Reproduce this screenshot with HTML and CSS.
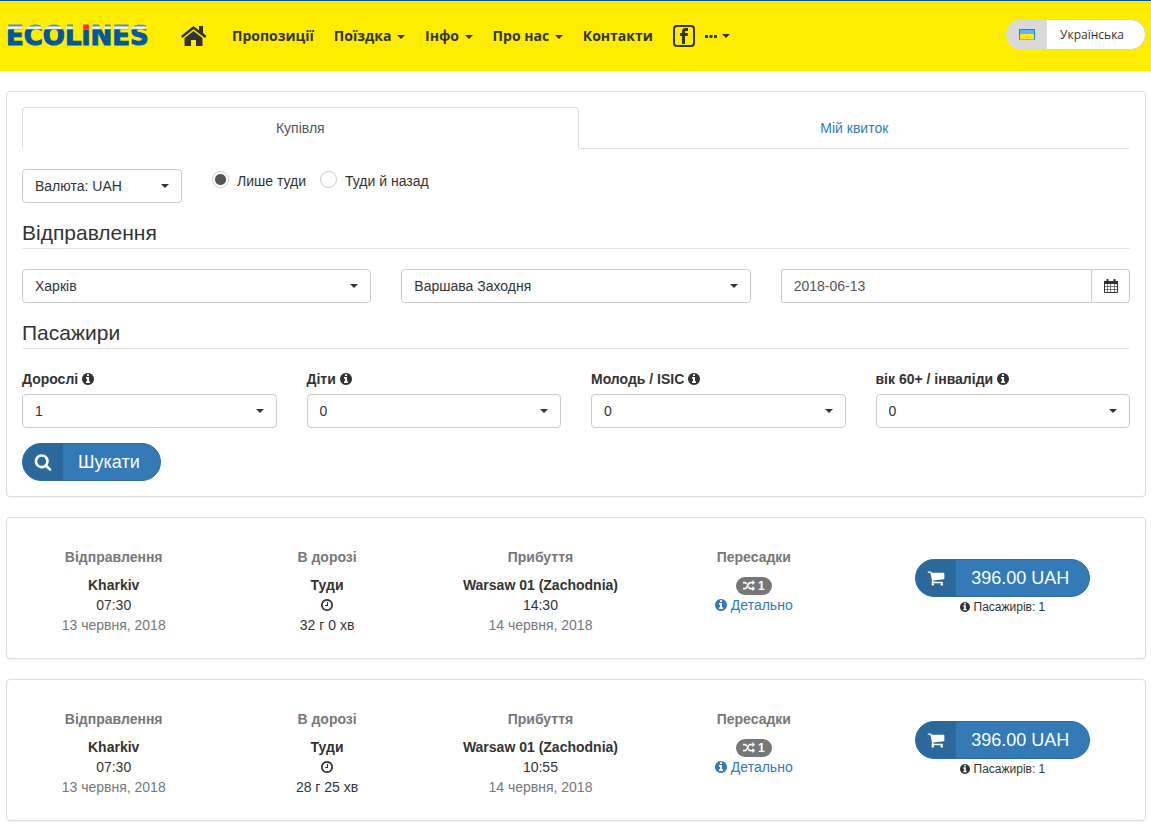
FILE: index.html
```html
<!DOCTYPE html>
<html lang="uk">
<head>
    <meta charset="UTF-8">
    <meta name="viewport" content="width=device-width, initial-scale=1.0">
    <title>Ecolines</title>
    <link rel="stylesheet" href="styles.css">
</head>
<body>
    <!-- Icon set -->
    <svg class="icon-defs" aria-hidden="true">
        <symbol id="i-info" viewBox="0 0 1536 1792"><path d="M1024 1376v-160q0-14-9-23t-23-9h-96v-512q0-14-9-23t-23-9h-320q-14 0-23 9t-9 23v160q0 14 9 23t23 9h96v320h-96q-14 0-23 9t-9 23v160q0 14 9 23t23 9h448q14 0 23-9t9-23zm-128-896v-160q0-14-9-23t-23-9h-192q-14 0-23 9t-9 23v160q0 14 9 23t23 9h192q14 0 23-9t9-23zm640 416q0 209-103 385.5t-279.5 279.5-385.5 103-385.5-103-279.5-279.5-103-385.5 103-385.5 279.5-279.5 385.5-103 385.5 103 279.5 279.5 103 385.5z"/></symbol>
        <symbol id="i-clock" viewBox="128 0 1536 1792"><path d="M1024 544v448q0 14-9 23t-23 9h-320q-14 0-23-9t-9-23v-64q0-14 9-23t23-9h224v-352q0-14 9-23t23-9h64q14 0 23 9t9 23zm416 352q0-148-73-273t-198-198-273-73-273 73-198 198-73 273 73 273 198 198 273 73 273-73 198-198 73-273zm224 0q0 209-103 385.5t-279.5 279.5-385.5 103-385.5-103-279.5-279.5-103-385.5 103-385.5 279.5-279.5 385.5-103 385.5 103 279.5 279.5 103 385.5z"/></symbol>
        <symbol id="i-search" viewBox="0 0 1792 1792"><path d="M1216 832q0-185-131.5-316.5t-316.5-131.5-316.5 131.5-131.5 316.5 131.5 316.5 316.5 131.5 316.5-131.5 131.5-316.5zm512 832q0 52-38 90t-90 38q-54 0-90-38l-343-342q-179 124-399 124-143 0-273.5-55.5t-225-150-150-225-55.5-273.5 55.5-273.5 150-225 225-150 273.5-55.5 273.5 55.5 225 150 150 225 55.5 273.5q0 220-124 399l343 343q37 37 37 90z"/></symbol>
        <symbol id="i-cart" viewBox="0 0 1792 1792"><path d="M704 1536q0 52-38 90t-90 38-90-38-38-90 38-90 90-38 90 38 38 90zm896 0q0 52-38 90t-90 38-90-38-38-90 38-90 90-38 90 38 38 90zm128-1088v512q0 24-16.5 42.5t-40.5 21.5l-1044 122q13 60 13 70 0 16-24 64h920q26 0 45 19t19 45-19 45-45 19h-1024q-26 0-45-19t-19-45q0-11 8-31.5t16-36 21.5-40 15.5-29.5l-177-823h-204q-26 0-45-19t-19-45 19-45 45-19h256q16 0 28.5 6.5t19.5 15.5 13 24.5 8 26 5.5 29.5 4.5 26h1201q26 0 45 19t19 45z"/></symbol>
        <symbol id="i-random" viewBox="0 0 1792 1792"><path d="M666 481q-60 92-137 273-22-45-37-72.5t-40.5-63.5-51-56.5-63-35-81.5-14.5h-224q-14 0-23-9t-9-23v-192q0-14 9-23t23-9h224q250 0 410 225zm1126 799q0 14-9 23l-320 320q-9 9-23 9-13 0-22.5-9.5t-9.5-22.5v-192q-32 0-85 .5t-81 1-73-1-71-5-64-10.5-63-18.5-58-28.5-59-40-55-53.5-56-69.5q59-93 136-273 22 45 37 72.5t40.5 63.5 51 56.5 63 35 81.5 14.5h256v-192q0-14 9-23t23-9q12 0 24 10l319 319q9 9 9 23zm0-896q0 14-9 23l-320 320q-9 9-23 9-13 0-22.5-9.5t-9.5-22.5v-192h-256q-48 0-87 15t-69 45-51 61.5-45 77.5q-32 62-78 171-29 66-49.5 111t-54 105-64 100-74 83-90 68.5-106.5 42-128 16.5h-224q-14 0-23-9t-9-23v-192q0-14 9-23t23-9h224q48 0 87-15t69-45 51-61.5 45-77.5q32-62 78-171 29-66 49.5-111t54-105 64-100 74-83 90-68.5 106.5-42 128-16.5h256v-192q0-14 9-23t23-9q12 0 24 10l319 319q9 9 9 23z"/></symbol>
    </svg>

    <header>
        <a href="#" class="logo" aria-label="Ecolines">
            <svg width="152" height="32" viewBox="0 0 152 32">
                <defs>
                    <linearGradient id="letters" gradientUnits="userSpaceOnUse" x1="0" y1="5" x2="0" y2="25">
                        <stop offset=".05" stop-color="#5d90ae"/>
                        <stop offset=".1" stop-color="#fff"/>
                        <stop offset=".18" stop-color="#e4ecee"/>
                        <stop offset=".24" stop-color="#00579d"/>
                    </linearGradient>
                    <linearGradient id="dot" gradientUnits="userSpaceOnUse" x1="0" y1="5" x2="0" y2="25">
                        <stop offset=".24" stop-color="#ff2a1a"/>
                        <stop offset=".25" stop-color="#00579d"/>
                    </linearGradient>
                </defs>
                <text x="0" y="25" class="logo-text">ECOL<tspan class="logo-i">i</tspan>NES</text>
            </svg>
        </a>
        <nav>
            <a href="#" class="home" aria-label="Головна">
                <svg width="26" height="20" viewBox="0 0 26 20"><path d="M12.500 0 0 10l1.300 2L12.500 3.300 24 12l1.500-2-3.500-3V0h-4v4.200z"/><path d="M12.500 5 3.500 12v8H10v-6h5v6h6.500v-8z"/></svg>
            </a>
            <a href="#">Пропозиції</a>
            <a href="#">Поїздка <span class="caret"></span></a>
            <a href="#">Інфо <span class="caret"></span></a>
            <a href="#">Про нас <span class="caret"></span></a>
            <a href="#">Контакти</a>
            <a href="#" class="social" aria-label="Facebook">
                <svg width="22" height="22" viewBox="0 0 22 22"><rect x="1" y="1" width="20" height="20" rx="3" fill="none" stroke="currentColor" stroke-width="2"/><path d="M9 19v-8H7V8h2V6.500C9 4 10.500 3 12.500 3H15v3h-1.500C12.400 6 12 6.400 12 7.200V8h3l-.4 3H12v8z"/></svg>
                <svg class="dots" width="12" height="3" viewBox="0 0 12 3"><path d="M0 0h3v3H0zM4.500 0h3v3h-3zM9 0h3v3H9z"/></svg>
                <span class="caret"></span>
            </a>
        </nav>
        <button type="button" class="language">
            <span class="language-flag"><span class="flag"></span></span>
            <span class="language-name">Українська</span>
        </button>
    </header>

    <main>
        <form class="panel search">
            <div class="tabs">
                <a href="#" class="tab active">Купівля</a>
                <a href="#" class="tab">Мій квиток</a>
            </div>

            <div class="options">
                <div class="select currency">
                    <select aria-label="Валюта"><option>Валюта: UAH</option></select>
                </div>
                <div class="radios">
                    <label><input type="radio" name="way" checked> Лише туди</label>
                    <label><input type="radio" name="way"> Туди й назад</label>
                </div>
            </div>

            <h2>Відправлення</h2>
            <div class="row thirds">
                <div class="select">
                    <select aria-label="Звідки"><option>Харків</option></select>
                </div>
                <div class="select">
                    <select aria-label="Куди"><option>Варшава Заходня</option></select>
                </div>
                <div class="date">
                    <input type="text" value="2018-06-13" aria-label="Дата">
                    <button type="button" aria-label="Календар">
                        <svg width="14" height="14" viewBox="0 0 14 14"><path d="M0 2h14v3H0z"/><path d="M3.500 0v3M10.500 0v3" stroke="currentColor" stroke-width="2"/><path d="M.5 4.500v9h13v-9" fill="none" stroke="currentColor"/><path d="M3.500 5v8.500M6.500 5v8.500M10.500 5v8.500M1 7.500h12M1 10.500h12" fill="none" stroke="currentColor" stroke-opacity=".6"/></svg>
                    </button>
                </div>
            </div>

            <h2>Пасажири</h2>
            <div class="row quarters">
                <div>
                    <label for="adults">Дорослі <svg class="icon"><use href="#i-info"/></svg></label>
                    <div class="select"><select id="adults"><option>1</option></select></div>
                </div>
                <div>
                    <label for="children">Діти <svg class="icon"><use href="#i-info"/></svg></label>
                    <div class="select"><select id="children"><option>0</option></select></div>
                </div>
                <div>
                    <label for="youth">Молодь / ISIC <svg class="icon"><use href="#i-info"/></svg></label>
                    <div class="select"><select id="youth"><option>0</option></select></div>
                </div>
                <div>
                    <label for="seniors">вік 60+ / інваліди <svg class="icon"><use href="#i-info"/></svg></label>
                    <div class="select"><select id="seniors"><option>0</option></select></div>
                </div>
            </div>

            <button type="submit" class="btn">
                <span class="btn-icon"><svg><use href="#i-search"/></svg></span>
                <span class="btn-text">Шукати</span>
            </button>
        </form>

        <section class="panel trip">
            <div>
                <h3>Відправлення</h3>
                <p><strong>Kharkiv</strong></p>
                <p>07:30</p>
                <p class="muted">13 червня, 2018</p>
            </div>
            <div>
                <h3>В дорозі</h3>
                <p><strong>Туди</strong></p>
                <p><svg class="icon"><use href="#i-clock"/></svg></p>
                <p>32 г 0 хв</p>
            </div>
            <div>
                <h3>Прибуття</h3>
                <p><strong>Warsaw 01 (Zachodnia)</strong></p>
                <p>14:30</p>
                <p class="muted">14 червня, 2018</p>
            </div>
            <div>
                <h3>Пересадки</h3>
                <p><span class="badge"><svg><use href="#i-random"/></svg>1</span></p>
                <p><a href="#"><svg class="icon"><use href="#i-info"/></svg> Детально</a></p>
            </div>
            <div class="buy">
                <button type="button" class="btn">
                    <span class="btn-icon"><svg><use href="#i-cart"/></svg></span>
                    <span class="btn-text">396.00 UAH</span>
                </button>
                <p class="small"><svg class="icon"><use href="#i-info"/></svg> Пасажирів: 1</p>
            </div>
        </section>

        <section class="panel trip">
            <div>
                <h3>Відправлення</h3>
                <p><strong>Kharkiv</strong></p>
                <p>07:30</p>
                <p class="muted">13 червня, 2018</p>
            </div>
            <div>
                <h3>В дорозі</h3>
                <p><strong>Туди</strong></p>
                <p><svg class="icon"><use href="#i-clock"/></svg></p>
                <p>28 г 25 хв</p>
            </div>
            <div>
                <h3>Прибуття</h3>
                <p><strong>Warsaw 01 (Zachodnia)</strong></p>
                <p>10:55</p>
                <p class="muted">14 червня, 2018</p>
            </div>
            <div>
                <h3>Пересадки</h3>
                <p><span class="badge"><svg><use href="#i-random"/></svg>1</span></p>
                <p><a href="#"><svg class="icon"><use href="#i-info"/></svg> Детально</a></p>
            </div>
            <div class="buy">
                <button type="button" class="btn">
                    <span class="btn-icon"><svg><use href="#i-cart"/></svg></span>
                    <span class="btn-text">396.00 UAH</span>
                </button>
                <p class="small"><svg class="icon"><use href="#i-info"/></svg> Пасажирів: 1</p>
            </div>
        </section>
    </main>
</body>
</html>
```
FILE: styles.css
```css
* {
    margin: 0;
    padding: 0;
    box-sizing: border-box;
}

body {
    background-color: #fff;
    color: #333;
    font-family: "Liberation Sans", Arial, sans-serif;
    font-size: 14px;
    line-height: 20px;
}

a {
    color: #337ab7;
    text-decoration: none;
}

button, input, select {
    font: inherit;
    color: inherit;
}

button {
    cursor: pointer;
}

svg {
    fill: currentColor;
}

.icon-defs {
    display: none;
}

.icon {
    width: 12px;
    height: 14px;
    vertical-align: -2px;
}

/* Header */
header {
    display: flex;
    align-items: center;
    height: 71px;
    padding: 0 5px 0 6px;
    border-top: 1px solid #00529b;
    background-color: #ffed00;
    font-family: "Open Sans", sans-serif;
}

.logo {
    width: 165px;
}

.logo svg {
    display: block;
}

.logo-text {
    font-family: "DejaVu Sans", sans-serif;
    font-size: 26px;
    font-weight: bold;
    fill: url(#letters);
    stroke: url(#letters);
    stroke-width: 1px;
}

.logo-i {
    fill: url(#dot);
    stroke: url(#dot);
}

nav {
    display: flex;
    align-items: center;
}

nav a {
    padding: 0 10px;
    color: #333;
    font-weight: bold;
    white-space: nowrap;
}

.home svg {
    display: block;
}

nav .home {
    padding-right: 15px;
}

.social {
    display: flex;
    align-items: center;
}

.dots {
    margin-left: 10px;
    margin-right: 3px;
}

.caret {
    display: inline-block;
    margin-left: 2px;
    border: 4px solid transparent;
    border-top-color: #333;
    border-bottom: 0;
    vertical-align: middle;
}

.language {
    display: flex;
    height: 31px;
    margin-left: auto;
    margin-bottom: 3px;
    border: 1px solid #d5d5d5;
    border-radius: 16px;
    overflow: hidden;
    background-color: #fff;
    font-size: 12px;
    line-height: 29px;
}

.language-flag {
    display: flex;
    align-items: center;
    justify-content: center;
    width: 40px;
    background-color: #d9d9d9;
}

.flag {
    width: 16px;
    height: 11px;
    border: 1px solid #1e86e0;
    border-bottom-color: #e0b000;
    background: linear-gradient(#5cb5fb 50%, #ffe21a 50%);
}

.language-name {
    padding: 0 21px 0 13px;
}

/* Panels */
main {
    padding: 20px 5px 5px 6px;
}

.panel {
    margin-bottom: 20px;
    border: 1px solid #ddd;
    border-radius: 4px;
    box-shadow: 0 1px 1px rgba(0, 0, 0, 0.05);
}

.panel:last-child {
    margin-bottom: 0;
}

/* Search form */
.search {
    padding: 15px;
}

.tabs {
    display: flex;
    margin-bottom: 20px;
}

.tab {
    flex: 100;
    padding: 10px;
    border: 1px solid transparent;
    border-bottom-color: #ddd;
    text-align: center;
}

.tab.active {
    flex: 101;
    border-color: #ddd;
    border-bottom-color: transparent;
    border-radius: 4px 4px 0 0;
    color: #555;
}

.options {
    display: flex;
    gap: 30px;
    margin-bottom: 15px;
}

.currency {
    width: 160px;
}

.radios {
    display: flex;
    gap: 14px;
    padding-top: 2px;
}

.radios label {
    display: flex;
    gap: 8px;
}

.radios input {
    appearance: none;
    width: 17px;
    height: 17px;
    border: 1px solid #ccc;
    border-radius: 50%;
}

.radios input:checked {
    background: radial-gradient(circle, #555 5px, transparent 6px);
}

h2 {
    margin-bottom: 20px;
    border-bottom: 1px solid #e5e5e5;
    font-size: 21px;
    font-weight: normal;
    line-height: 30px;
}

.row {
    display: grid;
    gap: 30px;
    margin-bottom: 15px;
}

.thirds {
    grid-template-columns: repeat(3, 1fr);
}

.quarters {
    grid-template-columns: repeat(4, 1fr);
}

.quarters label {
    display: block;
    margin-bottom: 5px;
    font-weight: bold;
}

.select {
    position: relative;
}

.select select {
    display: block;
    appearance: none;
    width: 100%;
    height: 34px;
    padding: 0 12px;
    border: 1px solid #ccc;
    border-radius: 4px;
    background-color: #fff;
}

.select::after {
    content: "";
    position: absolute;
    top: 15px;
    right: 13px;
    border: 4px solid transparent;
    border-top-color: #333;
    border-bottom: 0;
    pointer-events: none;
}

.date {
    display: flex;
}

.date input {
    flex: 1;
    min-width: 0;
    height: 34px;
    padding: 0 12px;
    border: 1px solid #ccc;
    border-radius: 2px 0 0 2px;
    color: #555;
}

.date button {
    display: flex;
    align-items: center;
    justify-content: center;
    width: 38px;
    border: 1px solid #ccc;
    border-left: 0;
    border-radius: 0 4px 4px 0;
    background-color: #fff;
}

.btn {
    display: inline-flex;
    height: 38px;
    border: 1px solid #2e6da4;
    border-radius: 19px;
    overflow: hidden;
    background-color: #337ab7;
    color: #fff;
    font-size: 18px;
    line-height: 36px;
    vertical-align: top;
}

.btn-icon {
    display: flex;
    align-items: center;
    justify-content: center;
    width: 40px;
    background-color: #2b689c;
}

.btn-icon svg {
    width: 18px;
    height: 18px;
}

.btn-text {
    padding: 0 20px 0 15px;
}

/* Trips */
.trip {
    display: grid;
    grid-template-columns: 3fr 3fr 3fr 3fr 4fr;
    padding: 29px 0 23px;
    text-align: center;
}

h3 {
    margin-bottom: 8px;
    color: #777;
    font-size: 14px;
    line-height: 20px;
}

.muted {
    color: #777;
}

.badge {
    display: inline-flex;
    align-items: center;
    gap: 3px;
    height: 18px;
    padding: 0 7px;
    border-radius: 10px;
    background-color: #777;
    color: #fff;
    font-size: 12px;
    font-weight: bold;
    vertical-align: middle;
}

.badge svg {
    width: 12px;
    height: 12px;
}

.buy {
    padding-top: 12px;
}

.small {
    font-size: 12px;
}

.small .icon {
    width: 10px;
    height: 12px;
}
```
